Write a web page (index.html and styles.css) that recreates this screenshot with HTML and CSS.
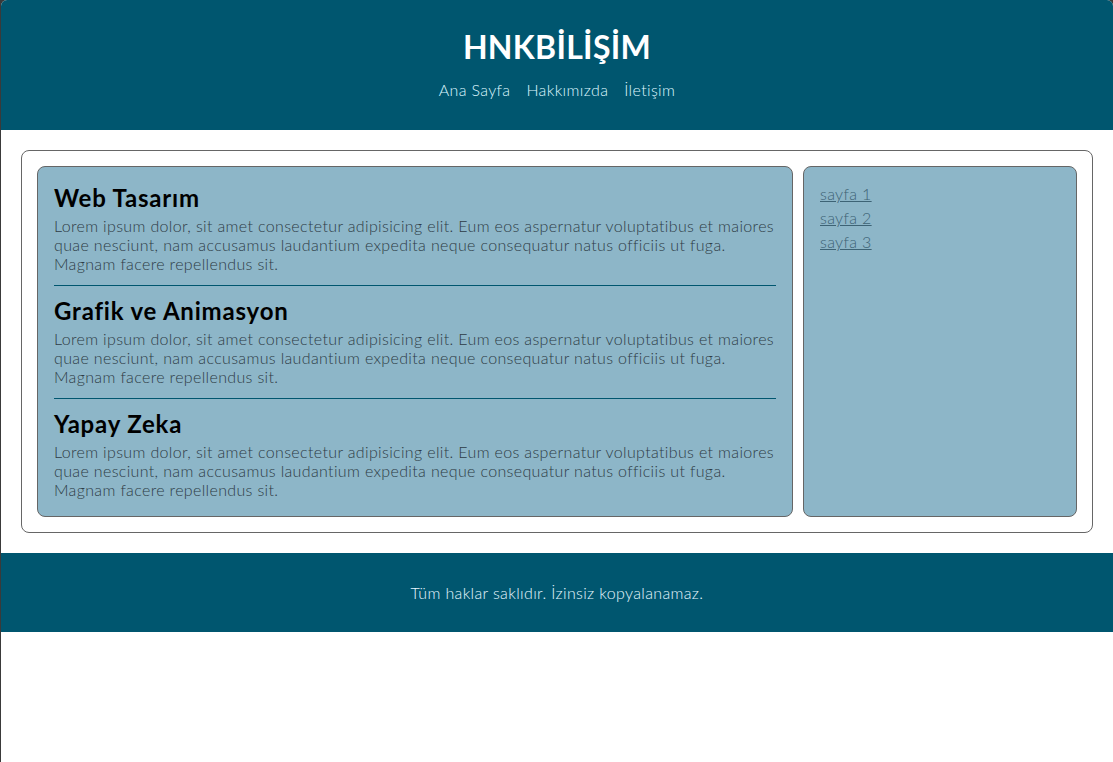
FILE: index.html
```html
<!DOCTYPE html>
<html lang="tr">
<head>
<meta charset="utf-8">
<title>HNKBİLİŞİM</title>
<link rel="stylesheet" href="styles.css">
</head>
<body>
<header class="site-header">
  <h1 class="logo">HNKBİLİŞİM</h1>
  <nav class="nav">
    <a href="#">Ana Sayfa</a>
    <a href="#">Hakkımızda</a>
    <a href="#">İletişim</a>
  </nav>
</header>
<main class="container">
  <section class="content">
    <article class="post">
      <h2>Web Tasarım</h2>
      <p>Lorem ipsum dolor, sit amet consectetur adipisicing elit. Eum eos aspernatur voluptatibus et maiores quae nesciunt, nam accusamus laudantium expedita neque consequatur natus officiis ut fuga. Magnam facere repellendus sit.</p>
    </article>
    <hr class="sep">
    <article class="post">
      <h2>Grafik ve Animasyon</h2>
      <p>Lorem ipsum dolor, sit amet consectetur adipisicing elit. Eum eos aspernatur voluptatibus et maiores quae nesciunt, nam accusamus laudantium expedita neque consequatur natus officiis ut fuga. Magnam facere repellendus sit.</p>
    </article>
    <hr class="sep">
    <article class="post">
      <h2>Yapay Zeka</h2>
      <p>Lorem ipsum dolor, sit amet consectetur adipisicing elit. Eum eos aspernatur voluptatibus et maiores quae nesciunt, nam accusamus laudantium expedita neque consequatur natus officiis ut fuga. Magnam facere repellendus sit.</p>
    </article>
  </section>
  <aside class="sidebar">
    <ul class="links">
      <li><a href="#">sayfa 1</a></li>
      <li><a href="#">sayfa 2</a></li>
      <li><a href="#">sayfa 3</a></li>
    </ul>
  </aside>
</main>
<footer class="site-footer">
  <p>Tüm haklar saklıdır. İzinsiz kopyalanamaz.</p>
</footer>
</body>
</html>
```
FILE: styles.css
```css
html {
  background: #3a3a3a;
  height: 100%;
}
body {
  margin: 0 0 0 1px;
  min-height: 100%;
  background: #ffffff;
  border-radius: 6px 6px 0 0;
  overflow: hidden;
  font-family: Lato, "Open Sans", sans-serif;
  font-weight: 300;
  font-size: 16px;
  letter-spacing: 0.35px;
  color: #333;
}
.site-header {
  background: #00566f;
  height: 130px;
  box-sizing: border-box;
  padding-top: 29px;
  text-align: center;
}
.logo {
  margin: 0;
  font-size: 32px;
  line-height: 36px;
  font-weight: 700;
  color: #ffffff;
  letter-spacing: 0.3px;
}
.nav {
  margin-top: 15px;
  display: flex;
  justify-content: center;
  gap: 16px;
  line-height: 19px;
}
.nav a {
  color: #dff6ff;
  text-decoration: none;
}
.container {
  margin: 20px;
  padding: 15px;
  border: 1px solid #666;
  border-radius: 8px;
  display: grid;
  grid-template-columns: 1fr 274px;
  gap: 10px;
}
.content, .sidebar {
  background: #8db6c8;
  border: 1px solid #666;
  border-radius: 8px;
  padding: 16px;
}
.content {
  padding-bottom: 17px;
}
.sidebar {
  padding-top: 15px;
}
.post h2 {
  margin: 0 0 4px;
  font-size: 24px;
  line-height: 29px;
  font-weight: 700;
  letter-spacing: 0.8px;
  color: #000;
}
.post p {
  margin: 0;
  line-height: 19px;
  color: #2e3c46;
}
.sep {
  margin: 12px 0 10px;
  border: 0;
  border-top: 1px solid #00566f;
  height: 0;
}
.links {
  list-style: none;
  margin: 0;
  padding: 0;
  line-height: 24px;
}
.links a {
  color: #3d6375;
}
.site-footer {
  background: #00566f;
  padding: 30px 0;
  text-align: center;
}
.site-footer p {
  margin: 0;
  line-height: 19px;
  color: #e6f7ff;
}
```
